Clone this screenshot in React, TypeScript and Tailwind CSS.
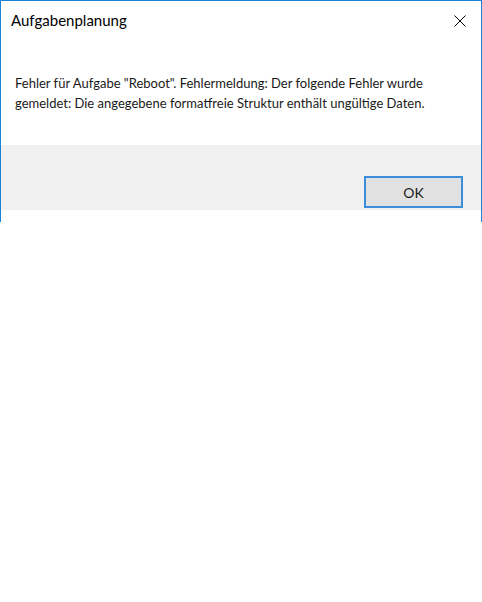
import React from "react";

export default function App() {
  return (
    <div className="w-[482px] bg-white">
      <div
        className="w-[482px] h-[222px] bg-white border-x border-t border-[#1883d7] flex flex-col"
        style={{ fontFamily: 'Lato, "Open Sans", sans-serif' }}
      >
        <div className="h-[40px] relative shrink-0">
          <div className="absolute left-[10px] top-[9px] text-[15px] leading-[20px] text-black">
            Aufgabenplanung
          </div>
          <svg
            className="absolute left-[453px] top-[14px]"
            width="12"
            height="12"
            viewBox="0 0 12 12"
          >
            <path d="M0.5 0.5 L11.5 11.5 M11.5 0.5 L0.5 11.5" stroke="#000" strokeWidth="1" fill="none" />
          </svg>
        </div>
        <div className="h-[104px] shrink-0 pl-[14px] pt-[32px] text-[13px] leading-[20px] text-[#1a1a1a]">
          <div>Fehler für Aufgabe "Reboot". Fehlermeldung: Der folgende Fehler wurde</div>
          <div>gemeldet: Die angegebene formatfreie Struktur enthält ungültige Daten.</div>
        </div>
        <div className="h-[65px] shrink-0 bg-[#f0f0f0] flex justify-end items-start pt-[31px] pr-[18px]">
          <button className="w-[99px] h-[32px] border-2 border-[#3c8ed9] bg-[#e1e1e1] text-[14px] text-[#1a1a1a] flex items-center justify-center">
            OK
          </button>
        </div>
        <div className="flex-1" />
      </div>
    </div>
  );
}
